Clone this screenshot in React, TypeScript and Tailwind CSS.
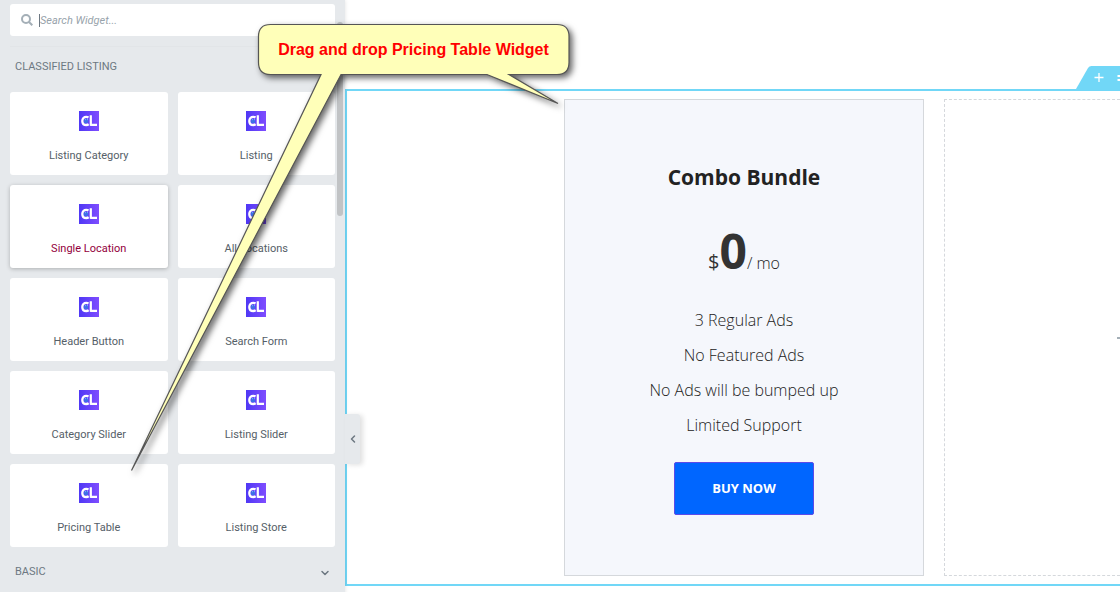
import React from "react"
import { FiChevronDown, FiChevronLeft } from "react-icons/fi"

const widgets = [
    "Listing Category",
    "Listing",
    "Single Location",
    "All Locations",
    "Header Button",
    "Search Form",
    "Category Slider",
    "Listing Slider",
    "Pricing Table",
    "Listing Store"
]

const features = ["3 Regular Ads", "No Featured Ads", "No Ads will be bumped up", "Limited Support"]

const Logo = () => (
    <svg className="size-5" viewBox="0 0 20 20" fill="none" aria-hidden="true">
        <defs>
            <linearGradient id="logo-bg" x1="0" y1="0" x2="1" y2="0">
                <stop offset="0" stopColor="#4f38f5" />
                <stop offset="1" stopColor="#7f4dff" />
            </linearGradient>
        </defs>
        <rect width="20" height="20" fill="url(#logo-bg)" />
        <rect x="5" y="8" width="4" height="4" fill="#3f6fe6" />
        <path d="M6.500 8V9.200M8.500 8V9.200" stroke="#7fb4ff" strokeWidth="0.800" />
        <path d="M9.500 6.400C8.800 6 8.100 5.900 7.300 5.900C4.900 5.900 3.300 7.600 3.300 9.900C3.300 12.300 4.900 14 7.300 14C8.200 14 9 13.800 9.700 13.300" stroke="#fff" strokeWidth="2.300" />
        <path d="M11.800 4.300V13.900H18" stroke="#fff" strokeWidth="2.200" strokeLinejoin="round" />
    </svg>
)

const Sidebar = () => (
    <aside className="relative z-10 w-[345px] shrink-0 bg-[#e6e9ec] px-[10px] pt-1 font-['Roboto',sans-serif] text-[11px] shadow-[0_0_4px_rgba(0,0,0,0.12)]">
        <label className="flex h-8 items-center gap-[6px] rounded-[3px] bg-white pl-[11px]">
            <svg className="size-3 shrink-0" viewBox="0 0 12 12" fill="none" stroke="#a4afb7" strokeWidth="2">
                <circle cx="5" cy="5" r="4" />
                <path d="M8 8L11.3 11.3" />
            </svg>
            <input
                type="text"
                aria-label="Search Widget"
                placeholder="Search Widget..."
                className="h-[13px] w-48 border-l border-[#6d7882] leading-[13px] outline-none placeholder:text-[#98a3ab] placeholder:italic"
            />
        </label>
        <div className="mt-[10px] border-t border-[#e2e5e8]" />
        <h2 className="px-[5px] pt-[13px] pb-[18px] leading-[14px] text-[#6d7882]">CLASSIFIED LISTING</h2>
        <div className="grid grid-cols-2 gap-[10px]">
            {widgets.map((name) => (
                <button
                    key={name}
                    type="button"
                    className={
                        name === "Single Location"
                            ? "flex h-[83px] flex-col items-center rounded-[3px] bg-white pt-[19px] text-[#93003c] shadow-[0_1px_4px_rgba(0,0,0,0.25)]"
                            : "flex h-[83px] flex-col items-center rounded-[3px] bg-white pt-[19px] text-[#556068]"
                    }
                >
                    <Logo />
                    <span className="pt-[18px] leading-[14px]">{name}</span>
                </button>
            ))}
        </div>
        <button type="button" className="flex h-[51px] w-full items-center justify-between pr-1 pl-[5px] text-[#6d7882]">
            BASIC
            <FiChevronDown size={12} strokeWidth={3} />
        </button>
        <div className="absolute top-[22px] right-[2px] h-[194px] w-[6px] rounded-full bg-[#c1c3c5]" />
        <button
            type="button"
            aria-label="Hide panel"
            className="absolute top-[414px] left-full flex h-[50px] w-[15px] items-center justify-center rounded-r-[3px] bg-[#e6e9ec] text-[#6d7882] shadow-[3px_1px_5px_rgba(0,0,0,0.12)]"
        >
            <FiChevronLeft size={12} strokeWidth={3} />
        </button>
    </aside>
)

const PricingCard = () => (
    <article className="flex flex-col items-center border border-[#d5d8dc] bg-[#f5f7fc] py-[60px] text-[#333]">
        <h2 className="text-[21px] leading-[34px] font-bold text-[#222]">Combo Bundle</h2>
        <div className="flex items-baseline pt-[25px] leading-[64px]">
            <span className="text-[20px]">$</span>
            <span className="text-[48px] font-bold">0</span>
            <span className="text-[16px] font-light text-[#222]">/ mo</span>
        </div>
        <ul className="pt-2 text-center text-[16px] leading-[35px] font-light text-[#222]">
            {features.map((item) => (
                <li key={item}>{item}</li>
            ))}
        </ul>
        <button
            type="button"
            className="mt-[19px] h-[53px] w-[140px] rounded-[2px] border border-[#5b4be8] bg-[#0066ff] text-[13px] font-bold text-white"
        >
            BUY NOW
        </button>
    </article>
)

const Canvas = () => (
    <main className="min-w-0 flex-1 overflow-hidden pt-[66px] font-['Open_Sans',sans-serif]">
        <div className="flex justify-end">
            <svg className="h-[23px] w-11" viewBox="0 0 44 23" fill="none" aria-hidden="true">
                <path d="M0 23L12 2Q13.200 0 15.500 0H44V23Z" fill="#71d7f7" />
                <path d="M18.500 11.500H27.500M23 7V16" stroke="#fff" strokeWidth="1.300" />
                <path d="M41.500 10H44M41.500 14H44" stroke="#fff" strokeWidth="2" />
            </svg>
        </div>
        <section className="grid grid-cols-[217fr_360px_196fr] border-y-2 border-l-2 border-[#71d7f7] py-2">
            <div />
            <PricingCard />
            <div className="ml-5 flex items-center justify-end border-y border-l border-dashed border-[#d5d8dc]">
                <span className="h-[2px] w-[3px] bg-[#a4afb7]" />
            </div>
        </section>
    </main>
)

const Callout = () => (
    <div className="pointer-events-none absolute top-0 left-0 z-20">
        <svg className="h-[490px] w-[590px] drop-shadow-[3px_3px_3px_rgba(0,0,0,0.6)]" viewBox="0 0 590 490" aria-hidden="true">
            <path
                d="M270.500 24.500H557Q569 24.500 569 36.500V62.500Q569 74.500 557 74.500H509L558 103.500L487 74.500H341L131.500 470.500L321 74.500H270.500Q258.500 74.500 258.500 62.500V36.500Q258.500 24.500 270.500 24.500Z"
                fill="#ffffb9"
                stroke="#555"
                strokeWidth="1.200"
            />
        </svg>
        <p className="absolute top-6 left-[258px] w-[311px] text-center font-['Liberation_Sans',sans-serif] text-[16px] leading-[51px] font-bold text-[#f00]">
            Drag and drop Pricing Table Widget
        </p>
    </div>
)

const App = () => (
    <div className="relative flex min-h-screen overflow-hidden bg-white">
        <Sidebar />
        <Canvas />
        <Callout />
    </div>
)
export default App
